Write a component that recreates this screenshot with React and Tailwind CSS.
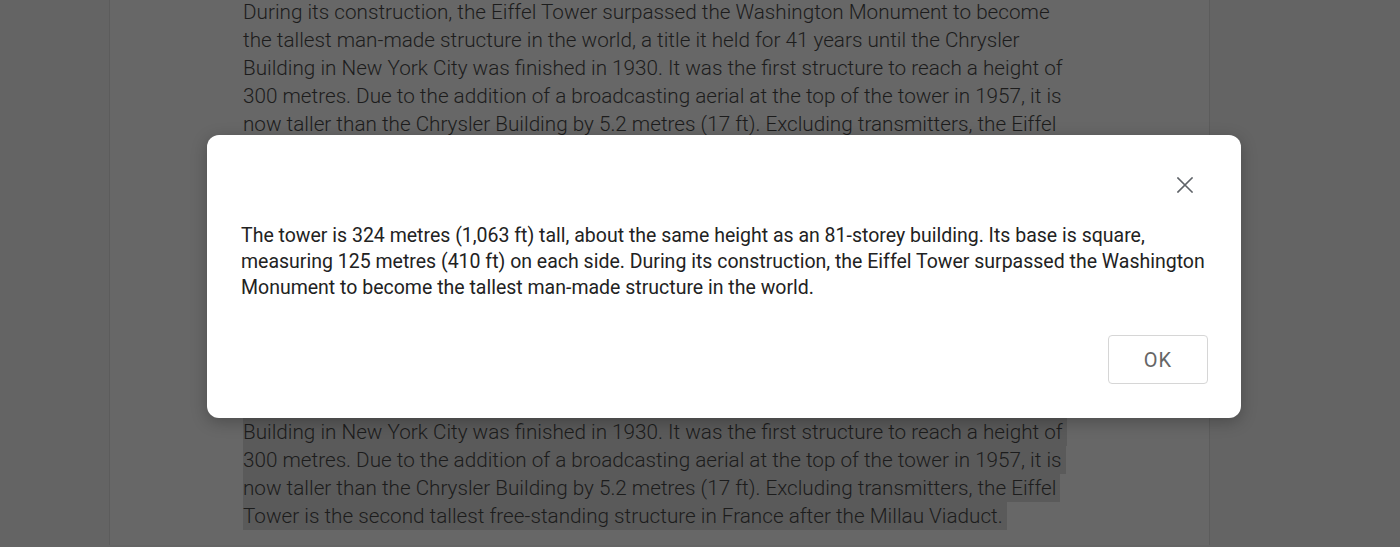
import React from 'react';

const topLines = [
  'During its construction, the Eiffel Tower surpassed the Washington Monument to become',
  'the tallest man-made structure in the world, a title it held for 41 years until the Chrysler',
  'Building in New York City was finished in 1930. It was the first structure to reach a height of',
  '300 metres. Due to the addition of a broadcasting aerial at the top of the tower in 1957, it is',
  'now taller than the Chrysler Building by 5.2 metres (17 ft). Excluding transmitters, the Eiffel',
  'Tower is the second tallest free-standing structure in France after the Millau Viaduct.',
];

const selectedLines = [
  'The tower is 324 metres (1,063 ft) tall, about the same height as an 81-storey building. Its',
  'base is square, measuring 125 metres (410 ft) on each side. During its construction, the',
  'Eiffel Tower surpassed the Washington Monument to become the tallest man-made structure',
  'in the world, a title it held for 41 years until the Chrysler',
  ...topLines.slice(2),
];

const modalLines = [
  'The tower is 324 metres (1,063 ft) tall, about the same height as an 81-storey building. Its base is square,',
  'measuring 125 metres (410 ft) on each side. During its construction, the Eiffel Tower surpassed the Washington',
  'Monument to become the tallest man-made structure in the world.',
];

const App = () => {
  return (
    <div className="relative h-[547px] w-[1400px] overflow-hidden bg-[#646464] font-['Roboto',_'Liberation_Sans',_sans-serif]">
      {/* document page, dimmed by the overlay */}
      <div className="ml-[109px] h-full w-[1101px] border-x border-[#5c5c5c] bg-[#676767]">
        <div className="-mt-[2px] pl-[133px] text-[20.7px] font-light leading-[28px] text-[#1c1c1c]">
          {topLines.map((line) => (
            <div key={line} className="whitespace-nowrap">{line}</div>
          ))}
          <div className="h-[140px]" />
          {selectedLines.map((line) => (
            <div key={'s' + line} className="whitespace-nowrap">
              <span className="inline-block h-[28px] bg-[#5a5a5a] pr-[4px]">{line}</span>
            </div>
          ))}
        </div>
      </div>

      {/* dialog */}
      <div className="absolute left-[207px] top-[135px] w-[1034px] rounded-[12px] bg-white pb-[34px] pt-[38px] shadow-[0_4px_16px_rgba(0,0,0,0.25)]">
        <div className="flex justify-end pr-[44px]">
          <button type="button" className="flex h-[24px] w-[24px] items-center justify-center text-[#5f6368]">
            <svg width="16" height="16" viewBox="0 0 16 16" fill="none" stroke="currentColor" strokeWidth="1.6" strokeLinecap="square">
              <path d="M1 1L15 15M15 1L1 15" />
            </svg>
          </button>
        </div>
        <div className="mt-[26px] pl-[34px] text-[19.5px] leading-[26px] text-[#222222]">
          {modalLines.map((line) => (
            <div key={line} className="whitespace-nowrap">{line}</div>
          ))}
        </div>
        <div className="mt-[34px] flex justify-end pr-[33px]">
          <button
            type="button"
            className="h-[49px] w-[100px] rounded-[4px] border border-[#d6d6d6] text-[20px] font-normal tracking-[1px] text-[#666666]"
          >
            OK
          </button>
        </div>
      </div>
    </div>
  );
};

export default App;
